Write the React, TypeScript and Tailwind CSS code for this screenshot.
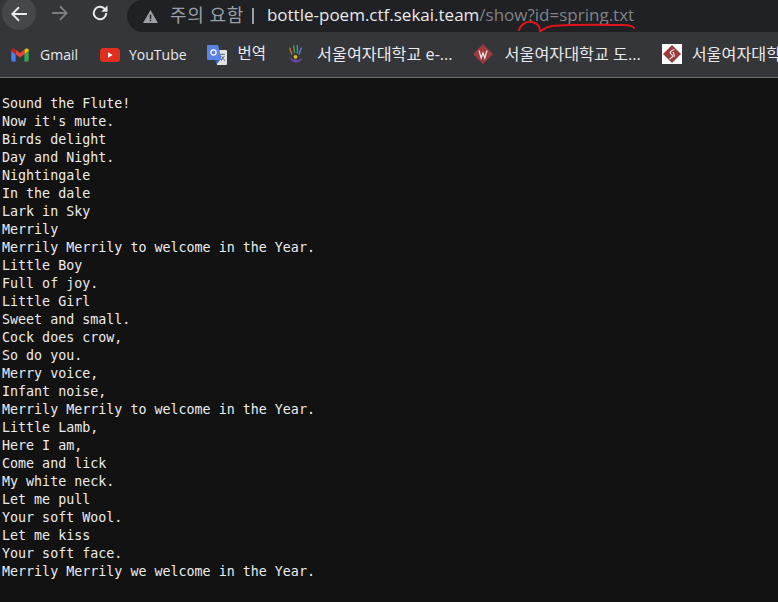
const lines = `Sound the Flute!
Now it's mute.
Birds delight
Day and Night.
Nightingale
In the dale
Lark in Sky
Merrily
Merrily Merrily to welcome in the Year.
Little Boy
Full of joy.
Little Girl
Sweet and small.
Cock does crow,
So do you.
Merry voice,
Infant noise,
Merrily Merrily to welcome in the Year.
Little Lamb,
Here I am,
Come and lick
My white neck.
Let me pull
Your soft Wool.
Let me kiss
Your soft face.
Merrily Merrily we welcome in the Year.`.split("\n");

const sans = "font-['Open_Sans','Noto_Sans_CJK_KR',sans-serif]";

function Bookmark({ icon, label, cls }: { icon: React.ReactNode; label: string; cls: string }) {
  return (
    <div className="flex items-center shrink-0">
      {icon}
      <span className={`text-[#e8eaed] whitespace-nowrap ${cls}`}>{label}</span>
    </div>
  );
}

const Gmail = (
  <svg width="18" height="14" viewBox="0 0 20 16" className="ml-[11px]">
    <path d="M1.5 15.5H5V7L0 3.5V14a1.5 1.5 0 0 0 1.5 1.5z" fill="#4285f4" />
    <path d="M15 15.5h3.5A1.5 1.5 0 0 0 20 14V3.5L15 7z" fill="#34a853" />
    <path d="M15 2v5l5-3.5V2.5C20 .8 17.8 0 16.5.9z" fill="#fbbc04" />
    <path d="M5 7V2l5 3.8L15 2v5l-5 3.8z" fill="#ea4335" />
    <path d="M0 3.5v-1C0 .8 2.2 0 3.5.9L5 2v5z" fill="#c5221f" />
  </svg>
);

const YouTube = (
  <svg width="20" height="14" viewBox="0 0 20 14" className="ml-[22px]">
    <rect width="20" height="14" rx="3.5" fill="#e02f1f" />
    <path d="M8 4.2v5.6L12.6 7z" fill="#fff" />
  </svg>
);

const Translate = (
  <svg width="20" height="20" viewBox="0 0 20 20" className="ml-[20px]">
    <path d="M8 5h11a1 1 0 0 1 1 1v13a1 1 0 0 1-1 1H10z" fill="#dfe1e5" />
    <path d="M1 0h10l4 15H1a1 1 0 0 1-1-1V1a1 1 0 0 1 1-1z" fill="#5b83e3" />
    <path d="M8 15h5l-3.2 4z" fill="#3a5fb8" />
    <circle cx="6.5" cy="7.5" r="2.6" fill="none" stroke="#fff" strokeWidth="1.2" />
    <path d="M13 9.5h5M15.5 8.5v1M14 16l3.5-5M14.5 11l3.5 5" stroke="#777" strokeWidth="1" fill="none" />
  </svg>
);

const Hand = (
  <svg width="17" height="20" viewBox="0 0 18 20" className="ml-[21px]">
    <path d="M3 4l2 6" stroke="#c0672f" strokeWidth="1.6" strokeLinecap="round" />
    <path d="M7 1.5l1 7" stroke="#4e9a3b" strokeWidth="1.6" strokeLinecap="round" />
    <path d="M11 1v8" stroke="#3b8ea5" strokeWidth="1.6" strokeLinecap="round" />
    <path d="M15 4l-2 6" stroke="#4e7fbe" strokeWidth="1.6" strokeLinecap="round" />
    <circle cx="9" cy="13" r="2" fill="#e4b92a" />
    <path d="M2 13c2 4 5 6 7 6 3 0 6-2 8-5-2 1-5 3-8 2-3 0-5-1-7-3z" fill="#6a4aa8" />
  </svg>
);

const Diamond = (
  <svg width="20" height="20" viewBox="0 0 20 20" className="ml-[20px]">
    <path d="M10 0l10 10-10 10L0 10z" fill="#9c3a3c" />
    <path d="M6 6.5l2.2 7.5L10 9l1.8 5L14 6.5" fill="none" stroke="#f0e2e2" strokeWidth="1.3" />
  </svg>
);

const DiamondWhite = (
  <div className="w-5 h-5 bg-white ml-[21px]">
    <svg width="20" height="20" viewBox="0 0 20 20">
      <path d="M10 1l9 9-9 9-9-9z" fill="#9c3a3c" />
      <path d="M12.5 5.5C9 6.5 7 8.5 9 10s3 2.5-1.500 5M11 8c1 2 2 3 1 5" fill="none" stroke="#f0e2e2" strokeWidth="1.2" />
    </svg>
  </div>
);

export default function App() {
  return (
    <div className={`relative w-[778px] h-[602px] overflow-hidden bg-[#121212] flex flex-col ${sans}`}>
      <div className="h-[32px] bg-[#35363a] flex items-center shrink-0">
        <div className="ml-[2px] w-[34px] h-[34px] shrink-0 rounded-full bg-[#46474b] flex items-center justify-center -mt-[6px] pt-[2px]">
          <svg width="18" height="18" viewBox="0 0 16 16" fill="none" stroke="#e8eaed" strokeWidth="1.6"><path d="M15 8H2M8 2L2 8l6 6" /></svg>
        </div>
        <div className="ml-[15px] w-[18px] flex -mt-[6px]">
          <svg width="18" height="18" viewBox="0 0 16 16" fill="none" stroke="#7c7d80" strokeWidth="1.6"><path d="M1 8h13M8 2l6 6-6 6" /></svg>
        </div>
        <div className="ml-[21px] -mt-[6px] flex">
          <svg width="20" height="20" viewBox="0 0 24 24" fill="none" stroke="#e8eaed" strokeWidth="2.4"><path d="M19.5 12a7.5 7.5 0 1 1-2.2-5.3L20 9.5" /><path d="M21 3v7.5h-7.5" fill="#e8eaed" stroke="none" /></svg>
        </div>
        <div className="ml-[17px] flex-1 h-[32px] rounded-l-[16px] bg-[#202124] flex items-center pl-[16px] whitespace-nowrap">
          <svg width="15" height="13" viewBox="0 0 16 14" className="shrink-0"><path d="M8 0L16 14H0z" fill="#9aa0a6" /><rect x="7.2" y="5" width="1.6" height="4.5" fill="#202124" /><rect x="7.2" y="10.5" width="1.6" height="1.6" fill="#202124" /></svg>
          <span className="ml-[12px] text-[18px] tracking-[0.6px] leading-[24px] text-[#9aa0a6] -mt-[3px]">주의 요함</span>
          <span className="ml-[8px] w-[2px] h-[16px] bg-[#9aa0a6] -mt-[1px]" />
          <span className="ml-[13px] text-[17px] leading-[24px] text-[#e8eaed] -mt-[2px]">bottle-poem.ctf.sekai.team</span>
          <span className="text-[17px] leading-[24px] text-[#7f8388] -mt-[2px]">/show?id=spring.txt</span>
        </div>
      </div>
      <div className="h-[46px] shrink-0 bg-[#35363a] border-b border-[#6a6b6e] flex items-center overflow-hidden">
        <Bookmark icon={Gmail} label="Gmail" cls="ml-[11px] text-[14px]" />
        <Bookmark icon={YouTube} label="YouTube" cls="ml-[9px] text-[14px]" />
        <Bookmark icon={Translate} label="번역" cls="ml-[11px] text-[15.5px] -mt-[1px]" />
        <Bookmark icon={Hand} label="서울여자대학교 e-..." cls="ml-[13px] text-[16.2px] -mt-[1px]" />
        <Bookmark icon={Diamond} label="서울여자대학교 도..." cls="ml-[12px] text-[16.2px] -mt-[1px]" />
        <Bookmark icon={DiamondWhite} label="서울여자대학" cls="ml-[10px] text-[16.2px] -mt-[1px]" />
      </div>
      <pre className="pt-[17px] pl-[2px] font-['DejaVu_Sans_Mono',monospace] text-[13.33px] leading-[18px] text-[#ececec]">
        {lines.join("\n")}
      </pre>
      <svg className="absolute left-[516px] top-[16px]" width="122" height="18" viewBox="0 0 122 18" fill="none" stroke="#e0161c" strokeWidth="2" strokeLinecap="round">
        <path d="M3 14C5 8 11 5 16 6c5 1 8 4 8 9 1 1 4-4 12-5 24-2 52-1 72-1 6 0 10 2 10 3" />
      </svg>
    </div>
  );
}
